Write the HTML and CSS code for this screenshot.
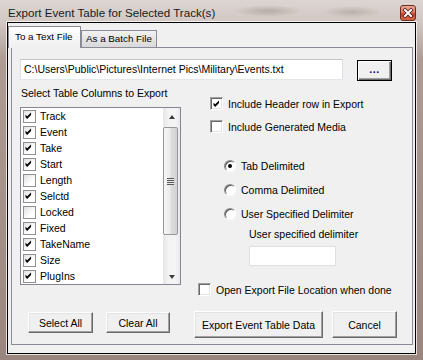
FILE: index.html
```html
<!DOCTYPE html>
<html lang="en">
<head>
    <meta charset="UTF-8">
    <meta name="viewport" content="width=device-width, initial-scale=1.0">
    <title>Export Event Table for Selected Track(s)</title>
    <link rel="stylesheet" href="styles.css">
</head>
<body>
    <svg width="0" height="0" class="defs">
        <symbol id="tick" viewBox="0 0 13 13">
            <path d="M3 5.5 L5 7.5 L9.5 3 L9.5 6 L5 10.5 L3 8.5 Z" fill="#000"/>
        </symbol>
    </svg>

    <div class="window">
        <!-- Title bar -->
        <div class="titlebar">
            <span class="title">Export Event Table for Selected Track(s)</span>
            <span class="close">
                <svg width="14" height="14" viewBox="0 0 14 14">
                    <path d="M4 4 L10 10 M10 4 L4 10" stroke="#4a1810" stroke-width="3.6" stroke-linecap="square"/>
                    <path d="M4 4 L10 10 M10 4 L4 10" stroke="#fff" stroke-width="2" stroke-linecap="square"/>
                </svg>
            </span>
        </div>

        <div class="client">
            <!-- Tabs -->
            <div class="tabs">
                <div class="tab active">To a Text File</div>
                <div class="tab">As a Batch File</div>
            </div>

            <div class="panel">
                <!-- Output file -->
                <div class="path-row">
                    <div class="textbox path">C:\Users\Public\Pictures\Internet Pics\Military\Events.txt</div>
                    <div class="btn browse">...</div>
                </div>

                <div class="columns">
                    <!-- Column list -->
                    <div class="left">
                        <div class="caption">Select Table Columns to Export</div>
                        <div class="listbox">
                            <ul class="items">
                                <li><span class="lcb"><svg><use href="#tick"/></svg></span>Track</li>
                                <li><span class="lcb"><svg><use href="#tick"/></svg></span>Event</li>
                                <li><span class="lcb"><svg><use href="#tick"/></svg></span>Take</li>
                                <li><span class="lcb"><svg><use href="#tick"/></svg></span>Start</li>
                                <li><span class="lcb"></span>Length</li>
                                <li><span class="lcb"><svg><use href="#tick"/></svg></span>Selctd</li>
                                <li><span class="lcb"></span>Locked</li>
                                <li><span class="lcb"><svg><use href="#tick"/></svg></span>Fixed</li>
                                <li><span class="lcb"><svg><use href="#tick"/></svg></span>TakeName</li>
                                <li><span class="lcb"><svg><use href="#tick"/></svg></span>Size</li>
                                <li><span class="lcb"><svg><use href="#tick"/></svg></span>PlugIns</li>
                            </ul>
                            <div class="scrollbar">
                                <span class="sb-btn"><span class="arrow up"></span></span>
                                <span class="thumb"><span class="grip"></span></span>
                                <span class="sb-btn"><span class="arrow down"></span></span>
                            </div>
                        </div>
                    </div>

                    <!-- Options -->
                    <div class="right">
                        <div class="opt first"><span class="cb"><svg><use href="#tick"/></svg></span>Include Header row in Export</div>
                        <div class="opt second"><span class="cb"></span>Include Generated Media</div>

                        <div class="radios">
                            <div class="opt radio-row"><span class="radio on"></span>Tab Delimited</div>
                            <div class="opt radio-row"><span class="radio"></span>Comma Delimited</div>
                            <div class="opt radio-row"><span class="radio"></span>User Specified Delimiter</div>
                        </div>

                        <div class="delim">
                            <div class="delim-label">User specified delimiter</div>
                            <div class="textbox delim-box"></div>
                        </div>

                        <div class="opt open-loc"><span class="cb"></span>Open Export File Location when done</div>
                    </div>
                </div>

                <!-- Actions -->
                <div class="buttons">
                    <div class="btn small select-all">Select All</div>
                    <div class="btn small clear-all">Clear All</div>
                    <div class="btn big export">Export Event Table Data</div>
                    <div class="btn big cancel">Cancel</div>
                </div>
            </div>
        </div>
    </div>
</body>
</html>
```

FILE: styles.css
```css
* {
    box-sizing: border-box;
}
body {
    margin: 0;
    font-family: "Liberation Sans", Arial, sans-serif;
    font-size: 10.5px;
    color: #000000;
    background: #ffffff;
}
.defs {
    position: absolute;
}
.window {
    width: 423px;
    height: 360px;
    display: flex;
    flex-direction: column;
    background: linear-gradient(to bottom, #ddd5d2 0, #d2c8c4 22px, #ad9b94 60px, #9a867e 100%);
}
.titlebar {
    height: 22px;
    display: flex;
    justify-content: space-between;
    padding: 0 7px 0 8px;
    background:
        radial-gradient(ellipse 34px 6px at 268px 11px, rgba(120, 105, 100, 0.35), transparent),
        radial-gradient(ellipse 30px 6px at 352px 12px, rgba(120, 105, 100, 0.3), transparent);
}
.title {
    font-size: 11.6px;
    line-height: 22px;
    padding-top: 2px;
    color: #1a1a1a;
}
.close {
    width: 16px;
    height: 16px;
    margin-top: 5px;
    display: flex;
    align-items: center;
    justify-content: center;
    border: 1px solid #6b2b20;
    border-radius: 3px;
    background: linear-gradient(to bottom, #eeab98 0, #dd7c62 45%, #c7452b 55%, #d46a4a 100%);
}
.client {
    height: 332px;
    margin: 0 7px 6px 7px;
    border: 1px solid #000000;
    box-shadow: 0 0 0 1px rgba(255, 255, 255, 0.75);
    background: #f0f0f0;
}

/* Tabs */
.tabs {
    height: 24px;
    display: flex;
    align-items: flex-end;
    position: relative;
    z-index: 1;
}
.tab {
    height: 17px;
    width: 76px;
    padding-left: 4px;
    border: 1px solid #898c95;
    border-bottom: none;
    background: linear-gradient(to bottom, #f2f2f2, #e5e5e5 50%, #d9d9d9);
    font-size: 9.8px;
    line-height: 16px;
    white-space: nowrap;
    overflow: hidden;
}
.tab.active {
    width: 73px;
    height: 22px;
    margin-bottom: -1px;
    padding-left: 6px;
    line-height: 19px;
    background: linear-gradient(to bottom, #ffffff, #f6f6f6 50%, #f0f0f0);
}
.panel {
    width: 402px;
    height: 298px;
    margin-left: 3px;
    border: 1px solid #898c95;
    background: #f0f0f0;
}

/* Path row */
.path-row {
    display: flex;
    align-items: flex-start;
    height: 21px;
    margin: 11px 0 0 8px;
}
.textbox {
    background: #ffffff;
    border: 1px solid;
    border-color: #c2c4c8 #dcdfe3 #e3e6ea #dcdfe3;
}
.path {
    width: 323px;
    height: 21px;
    padding-left: 3px;
    line-height: 19px;
    white-space: nowrap;
}
.btn {
    display: flex;
    align-items: center;
    justify-content: center;
    background: #f0f0f0;
    border: 1px solid;
    border-color: #ffffff #696969 #696969 #ffffff;
    box-shadow: inset -1px -1px 0 #a0a0a0, inset 1px 1px 0 #e3e3e3;
}
.browse {
    width: 35px;
    height: 21px;
    margin: 1px 0 0 14px;
    border: 1px solid #000000;
    box-shadow: inset 1px 1px 0 #ffffff, inset -1px -1px 0 #696969, inset -2px -2px 0 #a0a0a0;
    color: #000080;
    font-weight: bold;
    letter-spacing: 0.5px;
    padding-bottom: 3px;
}

/* Columns */
.columns {
    display: flex;
    margin-left: 8px;
    height: 216px;
}
.left {
    width: 161px;
}
.caption {
    margin-top: 6px;
    padding-left: 1px;
    line-height: 14px;
    height: 14px;
}
.listbox {
    margin-top: 7px;
    height: 178px;
    display: flex;
    border: 1px solid #828790;
    background: #ffffff;
}
.items {
    list-style: none;
    margin: 0;
    padding: 0;
    flex: 1;
}
.items li {
    height: 16px;
    display: flex;
    align-items: center;
    gap: 4px;
    padding-left: 2px;
}
.lcb {
    width: 13px;
    height: 13px;
    border: 1px solid #8f8f8f;
    background: linear-gradient(135deg, #e2e2e2, #ffffff 70%);
    display: flex;
}
.lcb svg,
.cb svg {
    width: 11px;
    height: 11px;
    margin: -1px 0 0 -1px;
    overflow: visible;
}
.scrollbar {
    width: 17px;
    display: flex;
    flex-direction: column;
    background: linear-gradient(to right, #e6e6e6, #f2f2f2 30%, #f5f5f5 70%, #e9e9e9);
}
.sb-btn {
    height: 17px;
    display: flex;
    align-items: center;
    justify-content: center;
}
.arrow {
    width: 0;
    height: 0;
    border-left: 3.5px solid transparent;
    border-right: 3.5px solid transparent;
}
.arrow.up {
    border-bottom: 4px solid #3c3c3c;
    margin-top: 1px;
}
.arrow.down {
    border-top: 4px solid #3c3c3c;
    margin-top: 2px;
}
.thumb {
    height: 108px;
    width: 15px;
    margin: 2px 0 0 0;
    border: 1px solid #979797;
    border-radius: 2px;
    background: linear-gradient(to right, #f6f6f6, #ececec 45%, #dcdcdc 55%, #d2d2d2);
    display: flex;
    align-items: center;
    justify-content: center;
}
.thumb + .sb-btn {
    margin-top: auto;
}
.grip {
    width: 7px;
    height: 7px;
    background: repeating-linear-gradient(to bottom, #5a5a5a 0, #5a5a5a 1px, #e8e8e8 1px, #e8e8e8 2px);
}

/* Right options */
.right {
    margin-left: 17px;
    display: flex;
    flex-direction: column;
}
.opt {
    display: flex;
    align-items: center;
    gap: 5px;
    height: 13px;
    white-space: nowrap;
}
.opt.first {
    margin: 17px 0 0 12px;
}
.opt.second {
    margin: 10px 0 0 12px;
}
.cb {
    width: 13px;
    height: 13px;
    display: flex;
    background: #ffffff;
    border: 1px solid;
    border-color: #a0a0a0 #ffffff #ffffff #a0a0a0;
    box-shadow: inset 1px 1px 0 #696969, inset -1px -1px 0 #e3e3e3;
}
.cb svg {
    margin: 0;
}
.radios {
    margin: 26px 0 0 26px;
    display: flex;
    flex-direction: column;
    gap: 11px;
}
.radio-row {
    height: 13px;
    gap: 5px;
}
.radio {
    width: 12px;
    height: 12px;
    border-radius: 50%;
    border: 1px solid;
    border-color: #8a8a8a #ffffff #ffffff #8a8a8a;
    box-shadow: inset 1px 1px 0 #5a5a5a;
    background: #ffffff;
    display: flex;
    align-items: center;
    justify-content: center;
}
.radio.on::after {
    content: "";
    width: 4px;
    height: 4px;
    border-radius: 50%;
    background: #000000;
}
.delim {
    margin: 7px 0 0 51px;
}
.delim-label {
    line-height: 14px;
}
.delim-box {
    width: 87px;
    height: 20px;
    margin-top: 5px;
    border-color: #e0e0e0;
}
.open-loc {
    margin-top: 17px;
}

/* Buttons */
.buttons {
    display: flex;
    align-items: flex-start;
    margin: 15px 0 0 16px;
}
.btn.small {
    height: 21px;
    margin-top: 1px;
}
.select-all {
    width: 65px;
}
.clear-all {
    width: 64px;
    margin-left: 13px;
}
.btn.big {
    height: 27px;
}
.export {
    width: 129px;
    margin-left: 24px;
}
.cancel {
    width: 65px;
    margin-left: 9px;
}
```
